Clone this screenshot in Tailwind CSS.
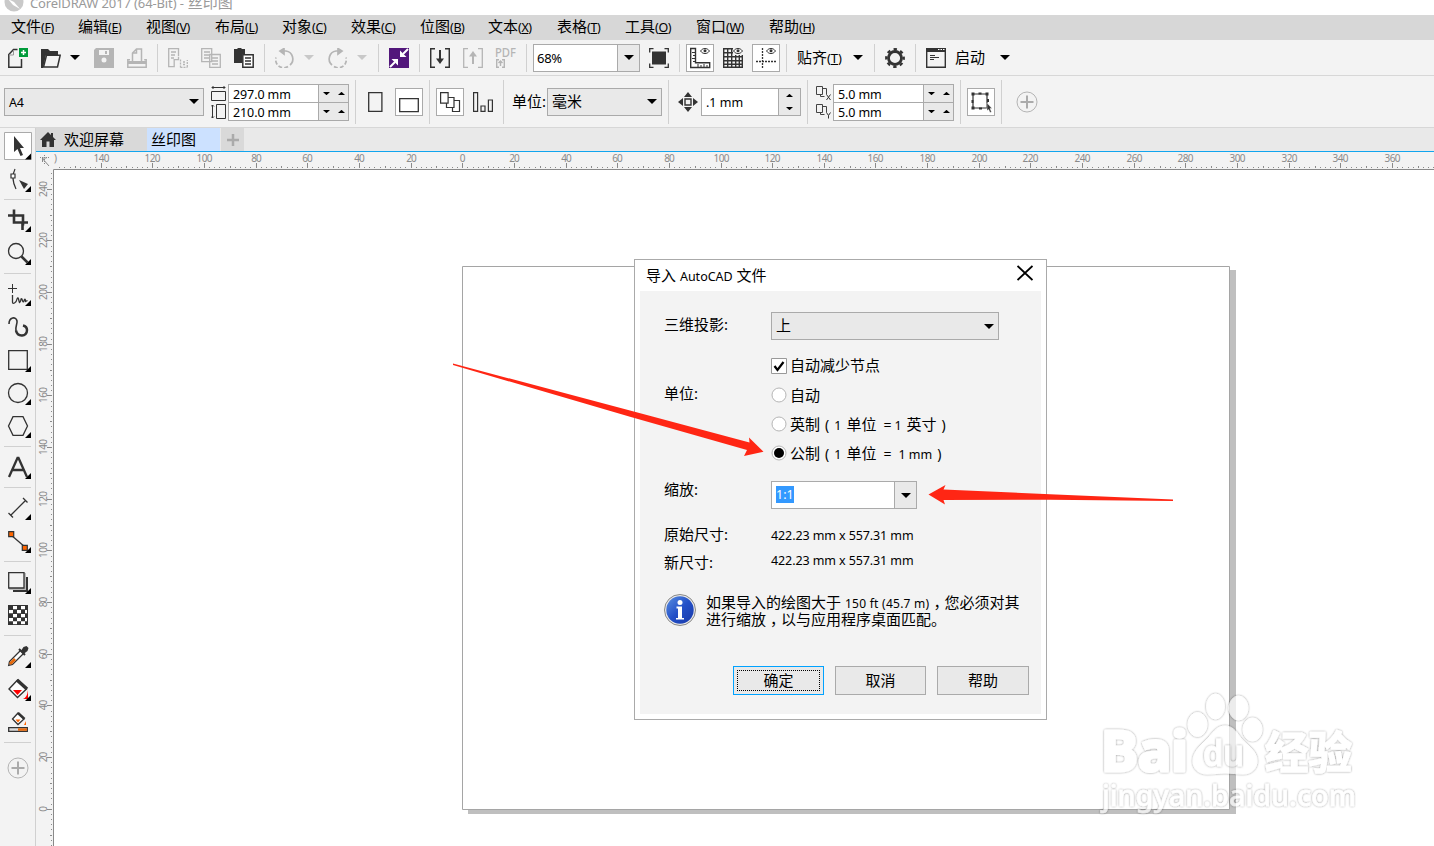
<!DOCTYPE html>
<html lang="zh-CN">
<head>
    <meta charset="UTF-8">
    <meta name="viewport" content="width=device-width, initial-scale=1.0">
    <title>CorelDRAW 2017 (64-Bit) - 丝印图</title>
    <script src="https://cdn.jsdelivr.net/npm/@tailwindcss/browser@4"></script>
</head>
<body class="w-[1434px] h-[846px] overflow-hidden flex flex-col bg-white text-black text-[15px] leading-5 whitespace-nowrap font-['Noto_Sans','Noto_Sans_CJK_SC',sans-serif]">

    <!-- Shared symbols -->
    <svg class="hidden">
        <symbol id="caret" viewBox="0 0 10 5"><path d="M0 0H10L5 5z" fill="currentColor"/></symbol>
        <symbol id="down" viewBox="0 0 7 3"><path d="M0 0H7L3.500 3.200z"/></symbol>
        <symbol id="up" viewBox="0 0 7 3"><path d="M0 3H7L3.500 -.2z"/></symbol>
        <symbol id="plus" viewBox="0 0 22 22"><circle cx="11" cy="11" r="10" fill="none" stroke="#b4b4b4"/><path d="M11 4.500v13M4.500 11h13" stroke="#ababab" stroke-width="2"/></symbol>
        <symbol id="eye" viewBox="0 0 10 6"><path d="M.5 3C2 1 3.500.5 5 .5S8 1 9.500 3C8 5 6.500 5.500 5 5.500S2 5 .5 3z" fill="#fff" stroke="#333"/><circle cx="5" cy="2.800" r="1.500" fill="#333"/></symbol>
        <symbol id="dup" viewBox="0 0 15 15"><path d="M.5 1.500h6v8h-6zM6.500 3.500h4v6M4.500 9.500v2h4" fill="none" stroke="#444"/></symbol>
    </svg>

    <!-- Title bar -->
    <div class="h-[15px] flex items-start shrink-0 overflow-hidden">
        <svg class="w-5 h-[15px] ml-1 mr-1.5" viewBox="0 0 20 15"><circle cx="10" cy="2" r="9.500" fill="#c9c9c9"/><path d="M4-1l6 3 6 7-7-4z" fill="#fff"/></svg>
        <div class="text-[#9a9a9a] -mt-2"><span class="text-[13px] tracking-[-0.120px]">CorelDRAW 2017 (64-Bit) -</span> 丝印图</div>
    </div>

    <!-- Menu -->
    <div class="h-[25px] shrink-0 flex items-center bg-[#d7d7d7] pl-[11px] pb-px">
        <div class="w-[67px]">文件<span class="text-[12.500px] tracking-[-0.400px]">(<u>F</u>)</span></div>
        <div class="w-[68px]">编辑<span class="text-[12.500px] tracking-[-0.400px]">(<u>E</u>)</span></div>
        <div class="w-[69px]">视图<span class="text-[12.500px] tracking-[-0.400px]">(<u>V</u>)</span></div>
        <div class="w-[67px]">布局<span class="text-[12.500px] tracking-[-0.400px]">(<u>L</u>)</span></div>
        <div class="w-[69px]">对象<span class="text-[12.500px] tracking-[-0.400px]">(<u>C</u>)</span></div>
        <div class="w-[69px]">效果<span class="text-[12.500px] tracking-[-0.400px]">(<u>C</u>)</span></div>
        <div class="w-[68px]">位图<span class="text-[12.500px] tracking-[-0.400px]">(<u>B</u>)</span></div>
        <div class="w-[69px]">文本<span class="text-[12.500px] tracking-[-0.400px]">(<u>X</u>)</span></div>
        <div class="w-[68px]">表格<span class="text-[12.500px] tracking-[-0.400px]">(<u>T</u>)</span></div>
        <div class="w-[71px]">工具<span class="text-[12.500px] tracking-[-0.400px]">(<u>O</u>)</span></div>
        <div class="w-[73px]">窗口<span class="text-[12.500px] tracking-[-0.400px]">(<u>W</u>)</span></div>
        <div>帮助<span class="text-[12.500px] tracking-[-0.400px]">(<u>H</u>)</span></div>
    </div>

    <!-- Standard toolbar -->
    <div class="h-9 shrink-0 flex items-center bg-[#f3f3f3] border-b border-[#d7d7d7] pl-2">
        <svg class="size-5" viewBox="0 0 20 20"><path d="M9.500 1.500H5.500L.8 6.500V19.200H13.500V11" fill="none" stroke="#333" stroke-width="1.500"/><path d="M5.500 2v5H1" fill="none" stroke="#999"/><path d="M11 0h9v9h-9z" fill="#009b3a"/><path d="M15.500 2v5M13 4.500h5" stroke="#fff" stroke-width="1.500"/></svg>
        <svg class="size-5 ml-[13px]" viewBox="0 0 20 20"><path d="M0 20V1h7l2 2h8v4H5L2 20z" fill="#333"/><path d="M5.500 7.200H19.200L16.500 19H2.500z" fill="#f3f3f3" stroke="#333" stroke-width="1.500"/></svg>
        <svg class="w-2.5 h-[5px] ml-[9px]"><use href="#caret"/></svg>
        <svg class="size-5 ml-3.5" viewBox="0 0 20 20"><path d="M0 2l2-2h18v20H0z" fill="#b5b5b5"/><path d="M5 2h10v5H5zM7.500 12a2.500 2.500 0 1 0 5 0a2.500 2.500 0 1 0-5 0" fill="#f3f3f3"/><path d="M11 3h2v3h-2z" fill="#b5b5b5"/></svg>
        <svg class="size-5 ml-[13px]" viewBox="0 0 20 20" fill="none" stroke="#b5b5b5" stroke-width="1.500"><path d="M5.500 13V5l4-4h5v12M9.500 1v4h-4M3 11.700H.8v7.500h18.400v-7.500h-2"/><path d="M1 14.500h18" stroke-width="3"/></svg>
        <div class="w-px h-7 bg-[#d0d0d0] ml-2.5"></div>
        <svg class="size-5 ml-2.5" viewBox="0 0 20 20" fill="none" stroke="#b5b5b5" stroke-width="1.300"><path d="M10.500 8V.7H.7v18h5.500v-7h4.300v-3M3 4h5M3 7h4M3 10h3"/><path d="M12.500 11.500v8M12.500 19.300h7M19.300 19v-7M15 14h3M15 16.500h3" stroke-dasharray="2 1"/></svg>
        <svg class="size-5 ml-[13px]" viewBox="0 0 20 20" fill="#f3f3f3" stroke="#b5b5b5" stroke-width="1.300"><path d="M.7.7h10v13H.7zM3 4h6M3 7h5M3 10h5M8.700 6.500h10.600v13H8.700zM11 10h6M11 13h6M11 16h6"/></svg>
        <svg class="size-5 ml-[13px]" viewBox="0 0 20 20"><path d="M0 1h3l1-1h3l1 1h3v5H8v9H0z" fill="#333"/><path d="M8.800 6.800h10.400v12.400H8.800z" fill="#fff" stroke="#333" stroke-width="1.500"/><path d="M11 10h6M11 13h6M11 16h6" stroke="#333" stroke-width="1.300"/></svg>
        <div class="w-px h-7 bg-[#d0d0d0] ml-2.5"></div>
        <svg class="size-5 ml-2.5" viewBox="0 0 20 20" fill="none" stroke="#b5b5b5" stroke-width="1.700"><path d="M6 3h5a8 8 0 0 1 4 14"/><path d="M13 18.500a8 8 0 0 1-12-9" stroke-dasharray="4 2"/><path d="M9 .5v5.500L5 3z" fill="#b5b5b5"/></svg>
        <svg class="w-2.5 h-[5px] ml-[9px] text-[#c8c8c8]"><use href="#caret"/></svg>
        <svg class="size-5 ml-[13px]" viewBox="0 0 20 20" fill="none" stroke="#b5b5b5" stroke-width="1.700"><path d="M14 3H9a8 8 0 0 0-4 14"/><path d="M7 18.500a8 8 0 0 0 12-9" stroke-dasharray="4 2"/><path d="M11 .5v5.500l4-3z" fill="#b5b5b5"/></svg>
        <svg class="w-2.5 h-[5px] ml-2.5 text-[#c8c8c8]"><use href="#caret"/></svg>
        <div class="w-px h-7 bg-[#d0d0d0] ml-[11px]"></div>
        <svg class="size-5 ml-2.5" viewBox="0 0 20 20"><path d="M0 0h20v20H0z" fill="#52177b"/><path d="M19 1l-5 5M1 19l5-5" stroke="#fff" stroke-width="2"/><path d="M11 2.500V9h6.500zM9 17.500V11H2.500z" fill="#fff"/></svg>
        <div class="w-px h-7 bg-[#d0d0d0] ml-2.5"></div>
        <svg class="size-5 ml-2.5" viewBox="0 0 20 20"><path d="M5 .7H.7v18.600H5M15 .7h4.300v18.600H15" fill="none" stroke="#333" stroke-width="1.500"/><path d="M10 2v10" stroke="#333" stroke-width="2"/><path d="M6 10.500h8L10 16z" fill="#333"/></svg>
        <svg class="size-5 ml-[13px]" viewBox="0 0 20 20"><path d="M5 .7H.7v18.600H5M15 .7h4.300v18.600H15" fill="none" stroke="#b5b5b5" stroke-width="1.300"/><path d="M10 7v9" stroke="#b5b5b5" stroke-width="2"/><path d="M6 8.500h8L10 3z" fill="#b5b5b5"/></svg>
        <svg class="w-[22px] h-5 ml-3 overflow-visible" viewBox="0 0 22 20"><text x="0" y="9" font-size="12" font-weight="500" textLength="21" lengthAdjust="spacingAndGlyphs" fill="#b5b5b5">PDF</text><path d="M4 11.700H1.700v7.600H4M7 11.700h2.300v7.600H7M5.500 13v5M3.500 15l2-2 2 2" fill="none" stroke="#b5b5b5" stroke-width="1.400"/></svg>
        <div class="w-px h-7 bg-[#d0d0d0] ml-[9px]"></div>
        <div class="w-[107px] h-7 ml-1.5 flex items-center border border-[#aaa] bg-white">
            <div class="flex-1 pl-[3px] pt-px text-[13px] tracking-[-0.300px]">68%</div>
            <div class="w-[22px] h-full border-l border-[#aaa] bg-[#e9e9e9] flex items-center justify-center"><svg class="w-2.5 h-[5px]"><use href="#caret"/></svg></div>
        </div>
        <svg class="size-5 ml-[9px]" viewBox="0 0 20 20"><path d="M3 3.500h14v13H3z" fill="#333"/><path d="M4.500.7H.7v3.800M15.500.7h3.800v3.800M.7 15.500v3.800h3.800M19.300 15.500v3.800h-3.800" fill="none" stroke="#333" stroke-width="1.300"/></svg>
        <div class="w-px h-7 bg-[#d0d0d0] ml-2.5"></div>
        <div class="size-7 ml-1.5 border border-[#aaa] bg-white"><svg class="size-[26px]" viewBox="0 0 26 26"><path d="M3.700 3.500v19h19v-4.800H8.500V3.500z" fill="#fff" stroke="#333" stroke-width="1.400"/><path d="M5 7.500h3M6 10.500h2M5 13.500h3M6 16.500h2M11 22v-3M14 22v-2M17 22v-3M20 22v-2" stroke="#333"/><use href="#eye" x="13" y="3" width="10" height="6"/></svg></div>
        <svg class="size-5 ml-[9px]" viewBox="0 0 20 20"><path d="M.7 0v20M4.700 0v20M8.700 0v20M12.700 0v20M16.300 0v20M19.300 7v13M0 .7h11M0 4.700h11M0 8.700h20M0 12.700h20M0 16.300h20M0 19.300h20" stroke="#333" stroke-width="1.400"/><path d="M10 0h10v7H10z" fill="#f3f3f3"/><use href="#eye" x="10" y="0" width="10" height="6"/></svg>
        <div class="size-7 ml-[9px] border border-[#aaa] bg-white"><svg class="size-[26px]" viewBox="0 0 26 26"><path d="M9.500 3v20M3 16.500h20" stroke="#333" stroke-width="1.300" stroke-dasharray="2 1"/><use href="#eye" x="13" y="3" width="10" height="6"/></svg></div>
        <div class="w-px h-7 bg-[#d0d0d0] ml-1.5"></div>
        <div class="w-[46px] ml-2.5">贴齐<span class="text-[13px] tracking-[-0.100px]">(<u>T</u>)</span></div>
        <svg class="w-2.5 h-[5px] ml-2.5"><use href="#caret"/></svg>
        <div class="w-px h-7 bg-[#d0d0d0] ml-[11px]"></div>
        <svg class="size-5 ml-2.5" viewBox="0 0 20 20" fill="none" stroke="#333"><circle cx="10" cy="10" r="6.500" stroke-width="2.800"/><circle cx="10" cy="10" r="8.700" stroke-width="2.400" stroke-dasharray="3.400 3.430" stroke-dashoffset="1.700"/></svg>
        <div class="w-px h-7 bg-[#d0d0d0] ml-2.5"></div>
        <svg class="size-5 ml-2.5" viewBox="0 0 20 20"><path d="M.7.7h18.600v18.600H.7z" fill="#f3f3f3" stroke="#333" stroke-width="1.400"/><path d="M0 0h20v4H0z" fill="#333"/><path d="M12 1.500h1.500M14.500 1.500h1.500M17 1.500h1.500" stroke="#fff"/><path d="M4 7.500h5M4 9.500h9M4 11.500h4" stroke="#333"/></svg>
        <div class="w-[30px] ml-[9px] pb-0.5">启动</div>
        <svg class="w-2.5 h-[5px] ml-[15px]"><use href="#caret"/></svg>
    </div>

    <!-- Property bar -->
    <div class="h-[52px] shrink-0 flex items-center bg-[#f3f3f3] border-b border-[#d7d7d7] pl-1">
        <div class="w-[200px] h-7 flex items-center justify-between border border-[#aaa] bg-[#e9e9e9] pl-1 pr-1">
            <span class="pt-0.5 text-[12.500px] tracking-[-0.300px]">A4</span><svg class="w-2.5 h-[5px]"><use href="#caret"/></svg>
        </div>
        <svg class="w-[15px] h-[34px] ml-[7px] mt-[3px]" viewBox="0 0 15 34" fill="none" stroke="#333"><path d="M.5 5.500h14v9H.5zM5.500 18.500h9v14h-9zM1 1.500h13M2.500 0L1 1.500l1.500 1.500M12.500 0L14 1.500L12.500 3M1.500 19v13M0 20.500L1.500 19L3 20.500M0 30.500L1.500 32L3 30.500"/></svg>
        <div class="w-[121px] h-[37px] ml-0.5 mt-0.5 grid grid-cols-[89px_1fr] grid-rows-[18px_17px] border border-[#aaa] bg-white text-[12.500px] tracking-[-0.100px] leading-[19px]">
            <div class="pl-1 border-b border-[#aaa]">297.0 mm</div>
            <div class="bg-[#e9e9e9] border-l border-b border-[#aaa] flex items-center justify-center gap-2"><svg class="w-[7px] h-[3px]"><use href="#down"/></svg><svg class="w-[7px] h-[3px]"><use href="#up"/></svg></div>
            <div class="pl-1">210.0 mm</div>
            <div class="bg-[#e9e9e9] border-l border-[#aaa] flex items-center justify-center gap-2"><svg class="w-[7px] h-[3px]"><use href="#down"/></svg><svg class="w-[7px] h-[3px]"><use href="#up"/></svg></div>
        </div>
        <div class="w-px h-11 bg-[#d0d0d0] ml-1.5"></div>
        <svg class="w-[15px] h-5 ml-3" viewBox="0 0 15 20"><path d="M.7.7h13.200v18.600H.7z" fill="none" stroke="#333" stroke-width="1.300"/></svg>
        <div class="size-7 ml-3 border border-[#aaa] bg-white"><svg class="size-[26px]" viewBox="0 0 26 26"><path d="M3.700 9.700h18.600v13H3.700z" fill="none" stroke="#333" stroke-width="1.300"/></svg></div>
        <div class="w-px h-11 bg-[#d0d0d0] ml-1.5"></div>
        <div class="size-7 ml-1.5 border border-[#aaa] bg-white"><svg class="size-[26px]" viewBox="0 0 26 26" fill="#fff" stroke="#333" stroke-width="1.200"><path d="M15.500 11.500h7v11h-7z"/><path d="M9.500 8.500h7.500v10H9.500z"/><path d="M3.600 3.600h7.500v10.500H3.600z"/></svg></div>
        <svg class="size-5 ml-[9px]" viewBox="0 0 20 20" fill="none" stroke="#333" stroke-width="1.200"><path d="M.6.6h4v18.800h-4zM8 14h4v5.400H8zM15.400 8h4v11.400h-4z"/></svg>
        <div class="w-px h-11 bg-[#d0d0d0] ml-2.5"></div>
        <div class="w-[35px] ml-2 pb-0.5">单位:</div>
        <div class="w-[115px] h-7 flex items-center justify-between border border-[#aaa] bg-[#e9e9e9] px-1">
            <span class="pb-0.5">毫米</span><svg class="w-2.5 h-[5px]"><use href="#caret"/></svg>
        </div>
        <div class="w-px h-11 bg-[#d0d0d0] ml-1.5"></div>
        <svg class="size-5 ml-[9px]" viewBox="0 0 20 20"><path d="M10 0l4 5H6zM10 20l4-5H6zM0 10l5-4v8zM20 10l-5-4v8z" fill="#333"/><path d="M7 7h6v6H7z" fill="none" stroke="#333" stroke-width="1.400"/></svg>
        <div class="w-[100px] h-7 ml-[3px] flex border border-[#aaa] bg-white text-[12.500px] leading-[27px]">
            <div class="flex-1 pl-1">.1 mm</div>
            <div class="w-[22px] border-l border-[#aaa] bg-[#e9e9e9] flex flex-col items-center justify-center gap-2.5"><svg class="w-[7px] h-[3px]"><use href="#up"/></svg><svg class="w-[7px] h-[3px]"><use href="#down"/></svg></div>
        </div>
        <div class="w-px h-11 bg-[#d0d0d0] ml-1.5"></div>
        <svg class="w-4 h-[34px] ml-2 mt-px" viewBox="0 0 16 34"><use href="#dup" x="0" y="0" width="15" height="15"/><use href="#dup" x="0" y="18" width="15" height="15"/><path d="M10.500 9.500l4 5.500M14.500 9.500l-4 5.500M10.500 27.500l2 3 2-3M12.500 30.500v3" stroke="#333" fill="none"/></svg>
        <div class="w-[121px] h-[37px] ml-px mt-0.5 grid grid-cols-[89px_1fr] grid-rows-[18px_17px] border border-[#aaa] bg-white text-[12.500px] tracking-[-0.100px] leading-[19px]">
            <div class="pl-1 border-b border-[#aaa]">5.0 mm</div>
            <div class="bg-[#e9e9e9] border-l border-b border-[#aaa] flex items-center justify-center gap-2"><svg class="w-[7px] h-[3px]"><use href="#down"/></svg><svg class="w-[7px] h-[3px]"><use href="#up"/></svg></div>
            <div class="pl-1">5.0 mm</div>
            <div class="bg-[#e9e9e9] border-l border-[#aaa] flex items-center justify-center gap-2"><svg class="w-[7px] h-[3px]"><use href="#down"/></svg><svg class="w-[7px] h-[3px]"><use href="#up"/></svg></div>
        </div>
        <div class="w-px h-11 bg-[#d0d0d0] ml-1.5"></div>
        <div class="size-7 ml-1.5 border border-[#aaa] bg-white"><svg class="size-[26px]" viewBox="0 0 26 26"><path d="M5 5h14v14H5z" fill="none" stroke="#333" stroke-width="1.200"/><path d="M3.500 3.500h3v3h-3zM10.500 3.500h3v2h-3zM17.500 3.500h3v3h-3zM3.500 17.500h3v3h-3zM11 18.500h3v2h-3zM3.500 11h2v3h-2zM19 10h2v3h-2z" fill="#333"/><path d="M19 14l5 5.500h-2l1.500 3.500-1.500.5-1.300-3-1.700 1z" fill="#333" stroke="#fff" stroke-width=".4"/></svg></div>
        <div class="w-px h-11 bg-[#d0d0d0] ml-1.5"></div>
        <svg class="size-[22px] ml-3.5"><use href="#plus"/></svg>
    </div>

    <div class="flex-1 flex min-h-0">
        <!-- Toolbox -->
        <div class="w-9 shrink-0 pt-0.5 flex flex-col bg-[#f3f3f3] border-r border-[#d0d0d0]">
            <svg class="w-9 h-[33px]" viewBox="0 0 36 33"><path d="M4.500 2.500h27v27h-27z" fill="#fff" stroke="#aaa"/><path d="M14 6v16l3.500-3 3 7 2.500-1-3-7h4z" fill="#333"/><path d="M31 23.500v6h-6z"/></svg>
            <svg class="w-9 h-[33px]" viewBox="0 0 36 33"><path d="M15 6c-3 6-2 14 1 20" fill="none" stroke="#333" stroke-width="1.200"/><path d="M11 11h4v4h-4z" fill="#fff" stroke="#333" stroke-width="1.200"/><path d="M19 17l9 4-4 5z" fill="#333"/><path d="M31 23v6h-6z"/></svg>
            <div class="h-px mx-1 mt-[3px] mb-1 bg-[#d0d0d0]"></div>
            <svg class="w-9 h-[33px]" viewBox="0 0 36 33"><path d="M8 11.500h15v10M14 5.500V18.500h14M22.500 18v8" fill="none" stroke="#333" stroke-width="2.600"/><path d="M31 22v6h-6z"/></svg>
            <svg class="w-9 h-[33px]" viewBox="0 0 36 33"><circle cx="16" cy="14" r="7.500" fill="none" stroke="#333" stroke-width="1.300"/><path d="M21.500 19.500l6 6" stroke="#333" stroke-width="2.500"/><path d="M31 22v6h-6z"/></svg>
            <div class="h-px mx-1 mt-[3px] mb-1 bg-[#d0d0d0]"></div>
            <svg class="w-9 h-[33px]" viewBox="0 0 36 33"><path d="M12.500 6v9M8 10.500h9" stroke="#333"/><path d="M12.500 17v7q0 2 2 1t2.500-4q1-2 1.500 0t1 3.500q1 0 1.500-3.500q1-1 1.500 2q1 2 2-1.500q1-1 1 2l2-1" fill="none" stroke="#333" stroke-width="1.300"/><path d="M31 22v6h-6z"/></svg>
            <svg class="w-9 h-[33px]" viewBox="0 0 36 33"><path d="M9 13c0-7 7-8 8-3c.5 3-2 6-1 10" fill="none" stroke="#333" stroke-width="1.600"/><path d="M16 19.500c1.500 7 11 6.500 11-.5c0-3-2-4-4-4.500" fill="none" stroke="#333" stroke-width="2.500"/></svg>
            <svg class="w-9 h-[33px]" viewBox="0 0 36 33"><path d="M8.700 6.700h18.600v18.600H8.700z" fill="none" stroke="#333" stroke-width="1.300"/><path d="M31 22v6h-6z"/></svg>
            <svg class="w-9 h-[33px]" viewBox="0 0 36 33"><circle cx="18" cy="16" r="9.500" fill="none" stroke="#333" stroke-width="1.300"/><path d="M31 22v6h-6z"/></svg>
            <svg class="w-9 h-[33px]" viewBox="0 0 36 33"><path d="M8.500 16L13 6.700h10L27.500 16L23 25.300H13z" fill="none" stroke="#333" stroke-width="1.300"/><path d="M31 22v6h-6z"/></svg>
            <div class="h-px mx-1 mt-[3px] mb-1 bg-[#d0d0d0]"></div>
            <svg class="w-9 h-[33px]" viewBox="0 0 36 33"><path d="M9 26L17.500 7h1L27 26M12.500 19h11" fill="none" stroke="#333" stroke-width="2.300"/><path d="M31 22v6h-6z"/></svg>
            <div class="h-px mx-1 mt-[3px] mb-1 bg-[#d0d0d0]"></div>
            <svg class="w-9 h-[33px]" viewBox="0 0 36 33"><path d="M10.500 23.500L25.500 8.500M8.500 21l4.500 4.500M23 6l4.500 4.500" stroke="#333" stroke-width="1.300"/><path d="M31 22v6h-6z"/></svg>
            <svg class="w-9 h-[33px]" viewBox="0 0 36 33"><path d="M11 10l14 12" stroke="#333" stroke-width="1.300"/><path d="M8.700 6.700h5v5h-5zM22.300 20.300h5v5h-5z" fill="#f60" stroke="#333" stroke-width="1.200"/><path d="M31 22v6h-6z"/></svg>
            <div class="h-px mx-1 mt-[3px] mb-1 bg-[#d0d0d0]"></div>
            <svg class="w-9 h-[33px]" viewBox="0 0 36 33"><path d="M13 11h15v15H13z" fill="#333"/><path d="M9 7h17v17H9z" fill="#bbb"/><path d="M8.700 6.700h15.300v15.300H8.700z" fill="#f3f3f3" stroke="#333" stroke-width="1.300"/><path d="M31 22v6h-6z"/></svg>
            <svg class="w-9 h-[33px]" viewBox="0 0 36 33"><path d="M8 6h20v20H8z" fill="#333"/><path d="M13 8.700h4M21 8.700h4M9 12.700h4M17 12.700h4M25 12.700h2M13 16.700h4M21 16.700h4M9 20.700h4M17 20.700h4M25 20.700h2M13 24h4M21 24h4" stroke="#fff" stroke-width="3.300"/><path d="M8 25.200h20v.8H8z" fill="#333"/></svg>
            <div class="h-px mx-1 mt-[3px] mb-1 bg-[#d0d0d0]"></div>
            <svg class="w-9 h-[33px]" viewBox="0 0 36 33"><path d="M21 10L9.500 21.500L8.700 25.300L12.500 24.500L24 13" fill="#fff" stroke="#333" stroke-width="1.300"/><path d="M14 18l-4.500 4.500v2h2L16 20z" fill="#e8690b"/><path d="M19 9l6 6" stroke="#333" stroke-width="2"/><path d="M20.500 11.500l3-4.500 3-1 2 2-1 3-4 3z" fill="#333"/><path d="M31 22v6h-6z"/></svg>
            <svg class="w-9 h-[33px]" viewBox="0 0 36 33"><path d="M17.500 7l9 9-9 8.500L9 16z" fill="#fff" stroke="#333" stroke-width="1.400"/><path d="M17 7l10 9" stroke="#333" stroke-width="3.500"/><path d="M13 17h9l-4.500 5zM28 17v9h-5q4-1 5-9z" fill="#f00"/><path d="M31 22v6h-6z"/></svg>
            <svg class="w-9 h-[33px]" viewBox="0 0 36 33"><path d="M18 7l6 6-6 5.500L12.500 13z" fill="#fff" stroke="#333" stroke-width="1.300"/><path d="M18 7l6.500 6" stroke="#333" stroke-width="2.500"/><path d="M15.500 13.500h5l-2.500 3zM26 15v4h-2z" fill="#f60"/><path d="M8.700 21.700h18.600v3.600H8.700z" fill="#ddd" stroke="#333" stroke-width="1.300"/><path d="M18 22.300h9v2.500h-9z" fill="#e8690b"/></svg>
            <div class="h-px mx-1 mt-[3px] mb-1 bg-[#d0d0d0]"></div>
            <svg class="size-[22px] ml-[7px] mt-2.5"><use href="#plus"/></svg>
        </div>

        <div class="flex-1 flex flex-col">
            <!-- Document tabs -->
            <div class="h-6 shrink-0 flex bg-[#e9e9e9] border-b border-[#12a5ee]">
                <div class="w-[111px] flex items-center bg-[#d9d9d9] pl-1">
                    <svg class="w-4 h-[15px] mr-2" viewBox="0 0 16 15"><path d="M8 0L0 8h2v7h4.500V9.500h3V15H14V8h2L13 5V1h-2v2z" fill="#333"/></svg><span class="pb-0.5">欢迎屏幕</span>
                </div>
                <div class="w-[73px] flex items-center bg-[#cce1ff] pl-1 pb-0.5">丝印图</div>
                <div class="w-[23px] ml-px flex items-center justify-center bg-[#d9d9d9]"><svg class="size-3.5" viewBox="0 0 14 14"><path d="M7 1v12M1 7h12" stroke="#aaa" stroke-width="2.500"/></svg></div>
            </div>

            <!-- Rulers and drawing page -->
            <svg class="w-[1398px] h-[694px]" viewBox="36 152 1398 694">
                <path d="M36 152H1434V169H53V846H36z" fill="#f3f3f3"/>
                <path d="M53.500 846V169.500H1434" fill="none" stroke="#8a8a8a"/>
                <path d="M40 157.500h10M44.500 155v10" stroke="#888" stroke-dasharray="1 1"/>
                <path d="M42 158l7 8M42.500 162v-4h4" fill="none" stroke="#888"/>
                <g id="ruler" fill="#8a8a8a" font-size="10"></g>
                <path d="M468 270H1236V814H468z" fill="#bfbfbf"/>
                <path d="M462.500 266.500H1229.500V809.500H462.500z" fill="#fff" stroke="#a5a5a5"/>
            </svg>
        </div>
    </div>

    <!-- Import dialog -->
    <div class="absolute left-[634px] top-[259px] w-[413px] h-[461px] flex flex-col border border-[#aaa] bg-white px-[5px] pb-[5px]">
        <div class="h-[31px] shrink-0 flex items-center justify-between pl-1.5 pr-2">
            <div>导入 <span class="text-[12.500px]">AutoCAD</span> 文件</div>
            <svg class="size-4 mb-1.5" viewBox="0 0 16 16"><path d="M.5 1L15.500 15M15.500 1L.5 15" stroke="#000" stroke-width="1.900"/></svg>
        </div>
        <div class="flex-1 bg-[#f3f3f3] pl-6 pr-3 pt-[21px]">
            <div class="grid grid-cols-[107px_1fr]">
                <div class="pt-0.5">三维投影:</div>
                <div class="w-[228px] h-7 flex items-center justify-between border border-[#aaa] bg-[#e9e9e9] px-1"><span class="pb-0.5">上</span><svg class="w-2.5 h-[5px]"><use href="#caret"/></svg></div>
                <div class="pt-[43px]">单位:</div>
                <div class="pt-[11px] pb-px flex flex-col">
                    <div class="h-[29px] flex items-center gap-[3px]"><svg class="size-4" viewBox="0 0 16 16"><path d="M.5.5h15v15H.5z" fill="#fff" stroke="#999"/><path d="M3.500 8l3 4 6-8" fill="none" stroke="#000" stroke-width="2.200"/></svg><span class="pb-px">自动减少节点</span></div>
                    <div class="h-[29px] flex items-center gap-[3px]"><svg class="size-4" viewBox="0 0 16 16"><circle cx="8" cy="8" r="7" fill="#fff" stroke="#b5b5b5"/></svg>自动</div>
                    <div class="h-[29px] flex items-center gap-[3px]"><svg class="size-4" viewBox="0 0 16 16"><circle cx="8" cy="8" r="7" fill="#fff" stroke="#b5b5b5"/></svg>
                        <div class="pt-[3px]">英制<span class="text-sm ml-[5px]">(</span><span class="text-[12.500px] ml-[5px] mr-[5px]">1</span>单位<span class="text-sm ml-[7px] mr-[3px]">=</span><span class="text-[12.500px] mr-[5px]">1</span>英寸<span class="text-sm ml-[5px]">)</span></div>
                    </div>
                    <div class="h-[29px] flex items-center gap-[3px]"><svg class="size-4" viewBox="0 0 16 16"><circle cx="8" cy="8" r="7" fill="#fff" stroke="#b5b5b5"/><circle cx="8" cy="8" r="5"/></svg>
                        <div class="pt-[3px]">公制<span class="text-sm ml-[5px]">(</span><span class="text-[12.500px] ml-[5px] mr-[5px]">1</span>单位<span class="text-sm ml-[7px] mr-[7px]">=</span><span class="text-[12.500px]">1 mm</span><span class="text-sm ml-[5px]">)</span></div>
                    </div>
                </div>
                <div class="pt-[11px]">缩放:</div>
                <div class="w-[146px] h-7 mt-[13px] flex border border-[#aaa] bg-white">
                    <div class="flex-1 pl-1 pt-1"><span class="block w-[18px] h-[17px] bg-[#3399ff] text-white text-[12.500px] leading-[18px]">1:1</span></div>
                    <div class="w-[22px] border-l border-[#aaa] bg-[#e9e9e9] flex items-center justify-center"><svg class="w-2.5 h-[5px]"><use href="#caret"/></svg></div>
                </div>
                <div class="pt-[15px]">原始尺寸:</div>
                <div class="pt-[17px] text-[12.500px] tracking-[-0.100px]">422.23 mm x 557.31 mm</div>
                <div class="pt-1.5">新尺寸:</div>
                <div class="pt-[5px] text-[12.500px] tracking-[-0.100px]">422.23 mm x 557.31 mm</div>
            </div>
            <div class="flex h-[34px] mt-[22px]">
                <svg class="size-8 shrink-0" viewBox="0 0 32 32">
                    <defs><linearGradient id="blue" x1="0" y1="0" x2="1" y2="1"><stop offset="0" stop-color="#5a8fe0"/><stop offset=".5" stop-color="#2350c8"/><stop offset="1" stop-color="#1838a8"/></linearGradient></defs>
                    <circle cx="16" cy="16" r="15.500" fill="#e8e8e8" stroke="#888"/><circle cx="16" cy="16" r="13.700" fill="url(#blue)"/>
                    <circle cx="16" cy="8.500" r="2.500" fill="#fff"/><path d="M12.500 12.500H18V24h2v1.500h-8V24h2v-9.500h-1.500z" fill="#fff"/>
                </svg>
                <div class="ml-2.5 leading-[17px]">
                    <div class="h-[17px]">如果导入的绘图大于 <span class="text-xs tracking-[0.260px]">150 ft (45.7 m)</span><span class="ml-1 -mr-1">，</span>您必须对其</div>
                    <div class="h-[17px]">进行缩放<span class="ml-1 -mr-1">，</span>以与应用程序桌面匹配。</div>
                </div>
            </div>
            <div class="flex justify-end gap-[11px] mt-[38px]">
                <div class="w-[91px] h-[29px] border border-[#00a2ff] bg-[#e9e9e9] p-[3px]"><div class="h-full flex items-center justify-center border border-dotted border-black pb-0.5">确定</div></div>
                <div class="w-[91px] h-[29px] flex items-center justify-center border border-[#aaa] bg-[#e9e9e9] pb-0.5">取消</div>
                <div class="w-[92px] h-[29px] flex items-center justify-center border border-[#aaa] bg-[#e9e9e9] pb-0.5">帮助</div>
            </div>
        </div>
    </div>

    <!-- Arrows -->
    <svg class="absolute left-0 top-0 w-[1434px] h-[846px] pointer-events-none" viewBox="0 0 1434 846">
        <g fill="#ff2614">
            <path d="M453 363.500L630 410.500L749.500 442.500L749 437.500L763.500 451.700L744 456L747 450L630 416.700L453 365z"/>
            <path d="M1173 499.500L1050 494.300L943.500 489.500L945.500 485L928.500 494.500L945 504.500L943.500 500L1050 499.700L1173 501z"/>
        </g>
    </svg>

    <!-- Watermark -->
    <svg class="absolute left-[1090px] top-[685px] w-[280px] h-[135px] pointer-events-none" viewBox="1090 685 280 135">
        <defs>
            <filter id="halo" x="-10%" y="-20%" width="120%" height="140%">
                <feDropShadow dx="0" dy="0" stdDeviation="1" flood-color="#000" flood-opacity=".6"/>
            </filter>
        </defs>
        <g fill="#fff" stroke="#fff" stroke-width="1" stroke-linejoin="round" opacity=".7">
            <g filter="url(#halo)">
                <ellipse cx="1197.500" cy="724.500" rx="9.500" ry="12"/>
                <ellipse cx="1215.500" cy="706.500" rx="9" ry="12.500"/>
                <ellipse cx="1238.500" cy="708" rx="9.500" ry="12"/>
                <ellipse cx="1252.500" cy="729.500" rx="9.500" ry="11.500"/>
                <path d="M1225 726c-7 0-11 5-15 10c-6 7-17 14-17 25c0 8 6 13 14 13c7 0 11-1 18-1s12 1 18 1c9 0 14-6 14-13c0-11-11-16-17-24c-4-6-8-11-15-11z"/>
            </g>
            <text x="1101" y="771" font-size="55" font-weight="700" stroke-width="3" textLength="87" lengthAdjust="spacingAndGlyphs" filter="url(#halo)">Bai</text>
            <text x="1203" y="766" font-size="36" font-weight="600" textLength="41" lengthAdjust="spacingAndGlyphs" filter="url(#halo)">du</text>
            <text x="1265" y="769" font-size="44" font-weight="700" stroke-width="1.500" textLength="87" lengthAdjust="spacingAndGlyphs" filter="url(#halo)">经验</text>
            <text x="1102" y="806" font-size="28" font-weight="500" textLength="254" lengthAdjust="spacingAndGlyphs" stroke-width=".5" filter="url(#halo)">jingyan.baidu.com</text>
        </g>
    </svg>

    <script>
        // Ruler marks: one every 2 mm, longer at 10 and 20 mm
        const scale = 2.583;
        let marks = '';
        for (let mm = -156; mm <= 376; mm += 2) {
            const x = Math.round(462.2 + mm * scale);
            const h = mm % 20 === 0 ? 5 : mm % 10 === 0 ? 2 : 1;
            if (x > 54) marks += `<rect x="${x}" y="${168 - h}" width="1" height="${h}"/>`;
            if (mm % 20 === 0 && mm > -150) marks += `<text x="${x + .5}" y="162" text-anchor="middle" textLength="${5.3 * String(Math.abs(mm)).length}">${Math.abs(mm)}</text>`;
        }
        marks += '<text x="54" y="162" textLength="4">)</text>';
        for (let mm = -14; mm <= 246; mm += 2) {
            const y = Math.round(808.7 - mm * scale);
            const w = mm % 20 === 0 ? 5 : mm % 10 === 0 ? 2 : 1;
            if (y > 170) marks += `<rect x="${52 - w}" y="${y}" width="${w}" height="1"/>`;
            if (mm % 20 === 0) marks += `<text transform="translate(47 ${y}) rotate(-90)" text-anchor="middle" textLength="${5.3 * String(mm).length}">${mm}</text>`;
        }
        document.getElementById('ruler').innerHTML = marks;
    </script>
</body>
</html>
